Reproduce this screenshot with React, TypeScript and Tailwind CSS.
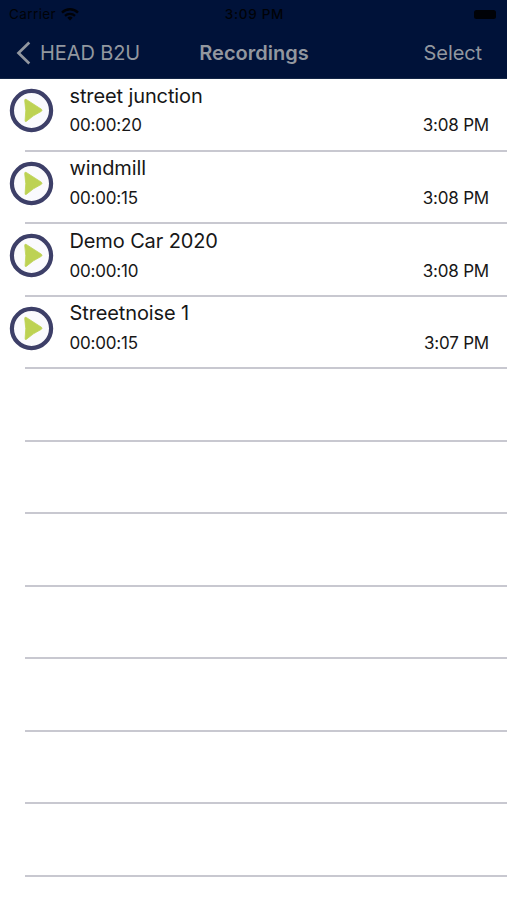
interface Recording {
    name: string;
    duration: string;
    time: string;
}

const recordings: Recording[] = [
    { name: "street junction", duration: "00:00:20", time: "3:08 PM" },
    { name: "windmill", duration: "00:00:15", time: "3:08 PM" },
    { name: "Demo Car 2020", duration: "00:00:10", time: "3:08 PM" },
    { name: "Streetnoise 1", duration: "00:00:15", time: "3:07 PM" },
];

const EMPTY_ROWS = 7;

const WifiIcon = () => (
    <svg viewBox="0 0 18 13" className="ml-[5px] h-[13px] w-[18px]" fill="none" stroke="#000207">
        <path d="M1 4.6a11.4 11.4 0 0 1 16 0" strokeWidth="2.4" />
        <path d="M4 7.9a7.1 7.1 0 0 1 10 0" strokeWidth="2.2" />
        <path d="M9 12.4 6.3 9.8a3.9 3.9 0 0 1 5.4 0Z" fill="#000207" stroke="none" />
    </svg>
);

const PlayButton = () => (
    <button className="mt-[9.4px] ml-[9px] size-[45px] shrink-0" aria-label="Play">
        <svg viewBox="0 0 45 45" className="size-full">
            <circle cx="22.5" cy="22.5" r="19.6" fill="#fafafd" stroke="#3d3f68" strokeWidth="4.2" />
            <path
                d="M17.2 11.4 32.4 21.2Q33.6 22.3 32.4 23.3Q24.5 27 17.2 33.4Q16 34 16.1 32.6Q17.6 22.5 15.7 12.4Q15.7 10.7 17.2 11.4Z"
                fill="#bdd253"
                stroke="#bdd253"
                strokeWidth="0.8"
                strokeLinejoin="round"
            />
        </svg>
    </button>
);

const Separator = () => <div className="ml-[25px] h-[2px] shrink-0 bg-[#c8c8d0]" />;

const RecordingRow = ({ name, duration, time }: Recording) => (
    <li className="flex h-[72.55px] flex-col">
        <div className="flex flex-1">
            <PlayButton />
            <div className="ml-[15.5px] flex flex-1 flex-col pt-[3.6px] pr-[18px]">
                <p className="text-[20px] leading-[26px] tracking-[-0.12px]">{name}</p>
                <div className="mt-[4.9px] flex justify-between text-[17px] leading-[24px] tracking-[-0.2px]">
                    <span>{duration}</span>
                    <span>{time}</span>
                </div>
            </div>
        </div>
        <Separator />
    </li>
);

export default function App() {
    return (
        <div className="flex h-[900px] w-[507px] flex-col overflow-hidden bg-white font-['Inter',sans-serif] text-[#171717]">
            <header className="h-[79px] shrink-0 border-b border-[#132646] bg-[#001239]">
                <div className="grid h-[28px] grid-cols-3 items-center pr-[10px] pl-[9px] text-[13.5px] text-[#000207]">
                    <div className="flex items-center">
                        <span className="tracking-[0.4px]">Carrier</span>
                        <WifiIcon />
                    </div>
                    <span className="pl-[3px] text-center font-medium tracking-[0.7px]">3:09 PM</span>
                    <div className="mr-px h-[9px] w-[22px] justify-self-end rounded-[2.5px] bg-[#000207]" />
                </div>
                <nav className="grid h-[50px] grid-cols-3 items-center px-4 text-[20px] text-[#92979f]">
                    <div className="flex items-center">
                        <svg viewBox="0 0 15 24" className="mr-[9px] h-6 w-[15px]" fill="none" stroke="currentColor">
                            <path d="M13.3 1.5 2.5 12l10.8 10.5" strokeWidth="2.7" />
                        </svg>
                        <span className="whitespace-nowrap tracking-[-0.1px]">HEAD B2U</span>
                    </div>
                    <h1 className="pl-px text-center font-semibold">Recordings</h1>
                    <span className="pr-[9px] text-right tracking-[-0.1px]">Select</span>
                </nav>
            </header>
            <ul className="flex flex-col">
                {recordings.map((recording) => (
                    <RecordingRow key={recording.name} {...recording} />
                ))}
                {Array.from({ length: EMPTY_ROWS }, (_, i) => (
                    <li key={i} className="flex h-[72.55px] flex-col justify-end">
                        <Separator />
                    </li>
                ))}
            </ul>
        </div>
    );
}
